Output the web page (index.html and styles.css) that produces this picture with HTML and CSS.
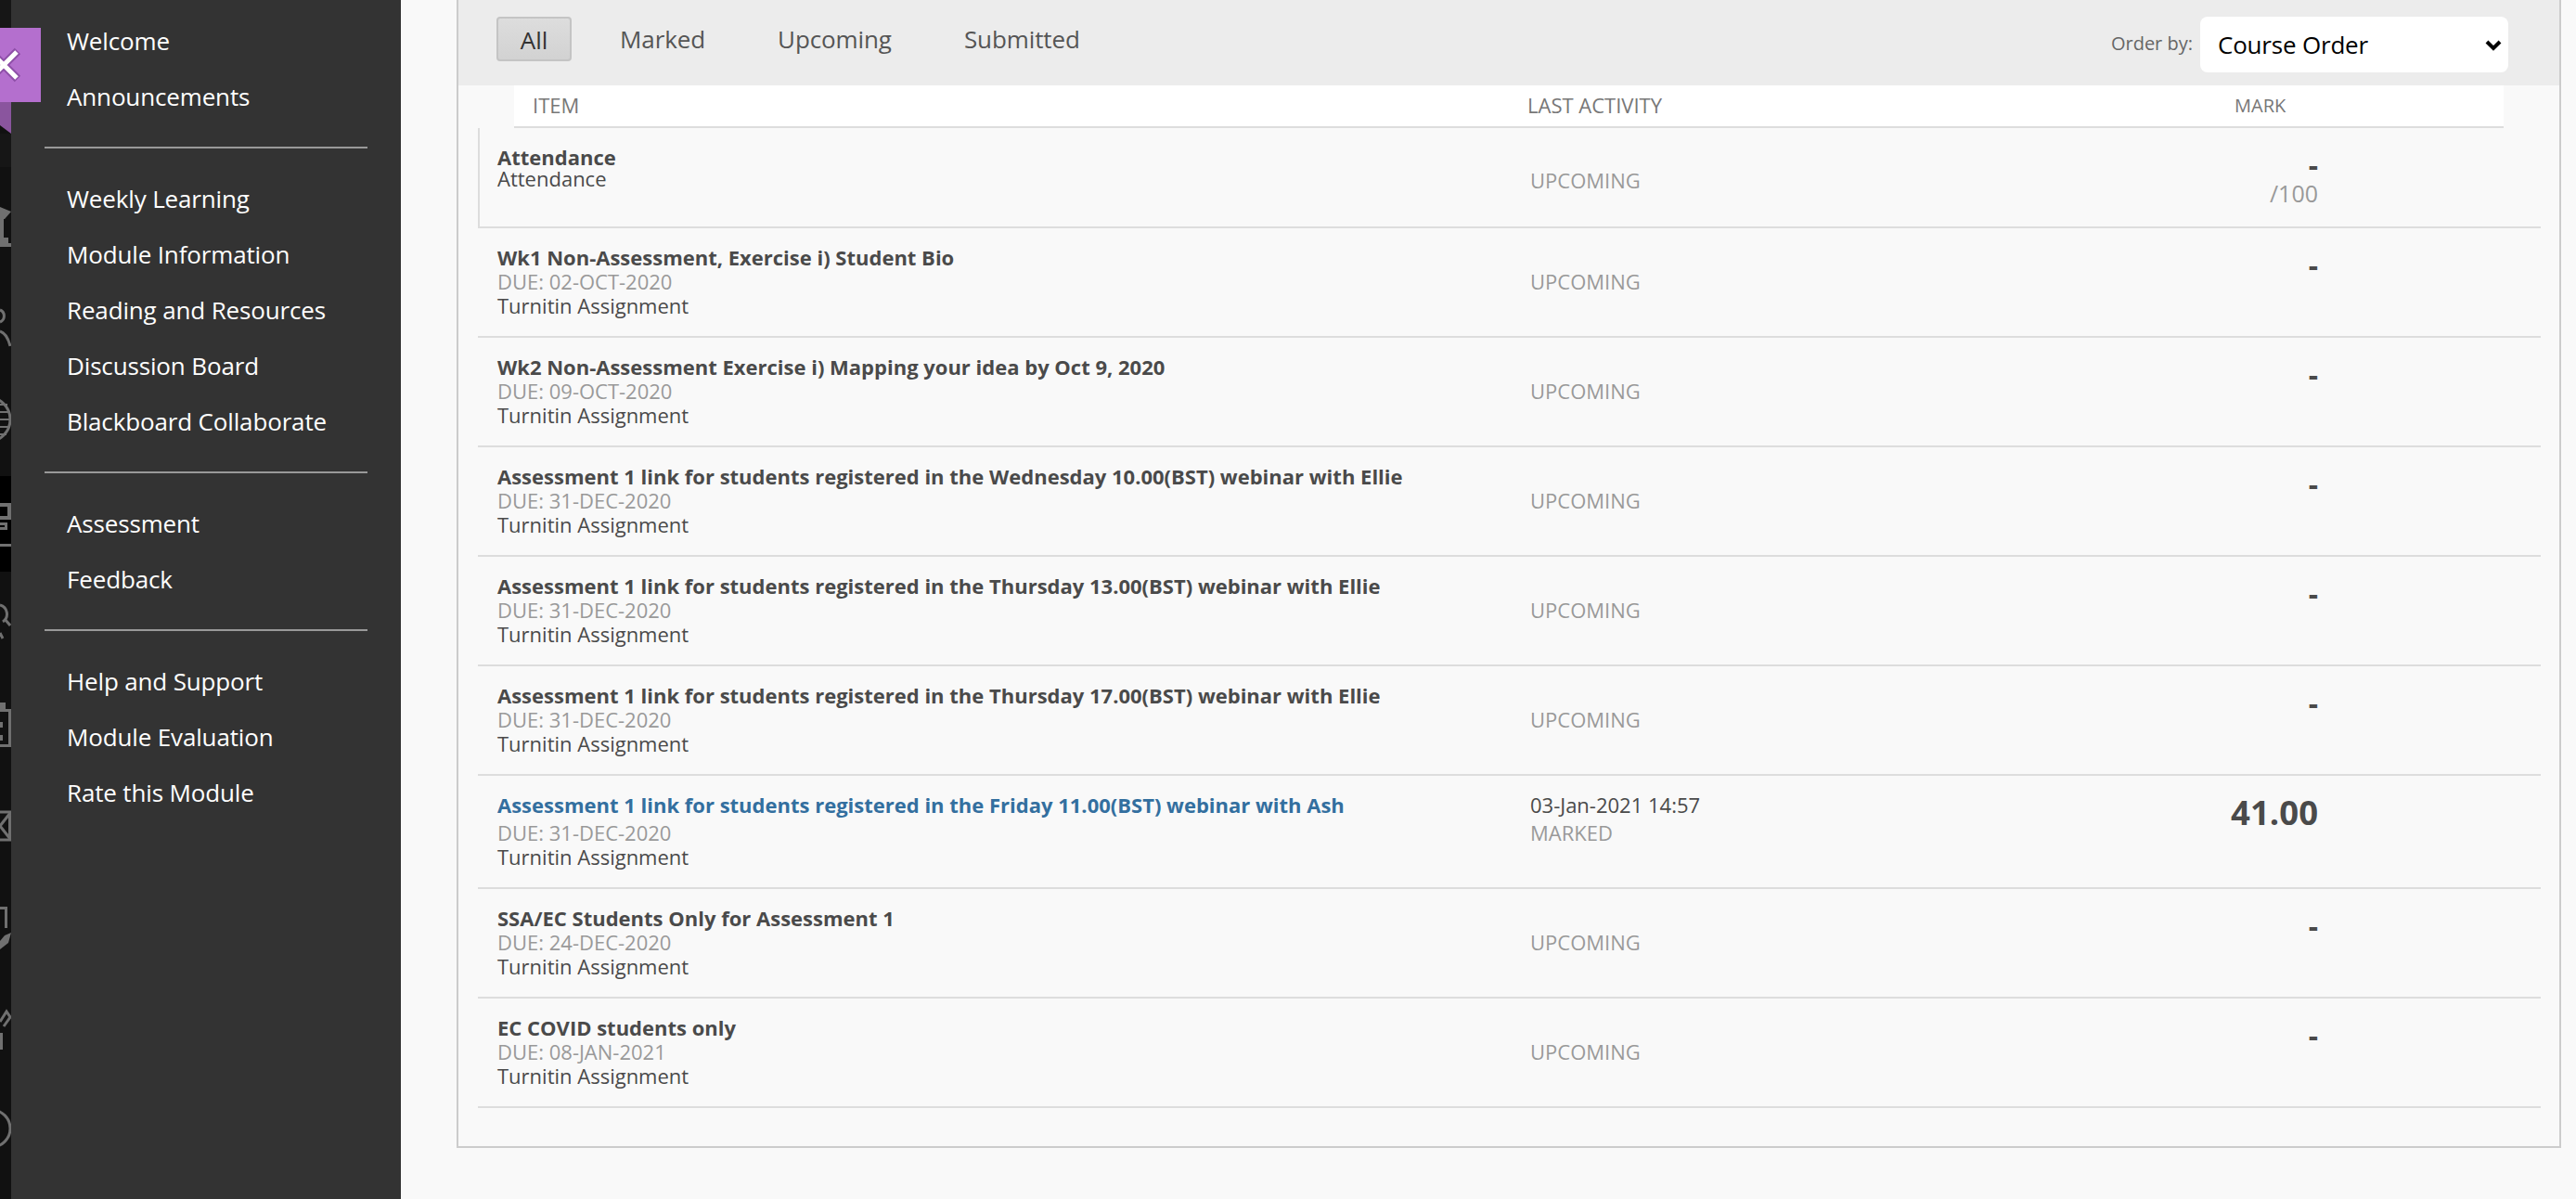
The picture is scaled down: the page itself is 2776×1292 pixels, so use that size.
FILE: index.html
```html
<!DOCTYPE html>
<html lang="en">
<head>
  <meta charset="UTF-8">
  <title>My Marks</title>
  <link rel="stylesheet" href="styles.css">
</head>
<body>
  <!-- Icon rail, mostly hidden behind the course menu -->
  <div class="rail">
    <svg width="12" height="1292" viewBox="0 0 12 1292">
      <rect x="0" y="0" width="12" height="1292" fill="#111"/>
      <rect x="0" y="0" width="12" height="30" fill="#161616"/>
      <rect x="0" y="513" width="12" height="103" fill="#000"/>
      <path d="M0 110 H12 V144 L0 135 Z" fill="#8a559e"/>
      <rect x="0" y="144" width="12" height="36" fill="#161616"/>
      <g fill="#707070">
        <path d="M0 223 L12 228 L5 236 H0 Z"/>
        <rect x="0" y="236" width="4" height="20"/>
        <path d="M0 256 H9 V262 H12 V266 H0 Z"/>
        <rect x="0" y="542" width="12" height="4"/>
        <rect x="8" y="542" width="4" height="18"/>
        <rect x="0" y="556" width="12" height="4"/>
        <rect x="0" y="563" width="8" height="3"/>
        <rect x="5" y="563" width="3" height="8"/>
        <rect x="0" y="568" width="8" height="3"/>
        <rect x="0" y="586" width="12" height="3"/>
        <rect x="0" y="757" width="6" height="8"/>
        <rect x="0" y="764" width="12" height="3"/>
        <rect x="9" y="764" width="3" height="41"/>
        <rect x="0" y="802" width="12" height="3"/>
        <rect x="0" y="778" width="3" height="6"/>
        <rect x="0" y="792" width="3" height="6"/>
        <path d="M12 1005 L9 1016 L0 1023 V1014 L5 1008 Z"/>
        <rect x="0" y="1113" width="3" height="18"/>
      </g>
      <g fill="none" stroke="#707070" stroke-width="3">
        <path d="M0 334 A7 7 0 0 1 0 347"/>
        <path d="M0 357 C6 359 9 365 11 373"/>
        <circle cx="-13" cy="452" r="24"/>
        <path d="M0 436 H8 M0 444 H11 M0 452 H11 M0 460 H10 M0 468 H7" stroke-width="2"/>
        <path d="M0 652 A10 10 0 0 1 3 670"/>
        <path d="M5 667 L11 674"/>
        <path d="M0 682 L3 688"/>
        <path d="M0 875 H10.500 V905 H0"/>
        <path d="M11 876 L0 890 L11 904"/>
        <path d="M0 978.500 H6.500 V1000"/>
        <path d="M0 1101 L7 1090 L11 1096 L4 1106"/>
        <circle cx="-9" cy="1216" r="20"/>
      </g>
    </svg>
  </div>

  <!-- Course menu -->
  <nav class="course-menu">
    <div class="close-tag">
      <svg width="44" height="80" viewBox="0 0 44 80"><path d="M-11 25 L19 55 M19 25 L-11 55" stroke="#8e4fa8" stroke-width="9" fill="none"/><path d="M-11 25 L18 54 M18 26 L-11 55" stroke="#fff" stroke-width="5" fill="none"/></svg>
    </div>
    <ul class="menu-group">
      <li>Welcome</li>
      <li>Announcements</li>
    </ul>
    <ul class="menu-group">
      <li>Weekly Learning</li>
      <li>Module Information</li>
      <li>Reading and Resources</li>
      <li>Discussion Board</li>
      <li>Blackboard Collaborate</li>
    </ul>
    <ul class="menu-group">
      <li>Assessment</li>
      <li>Feedback</li>
    </ul>
    <ul class="menu-group">
      <li>Help and Support</li>
      <li>Module Evaluation</li>
      <li>Rate this Module</li>
    </ul>
  </nav>

  <main class="content">
    <div class="panel">
      <!-- Filter bar -->
      <div class="toolbar">
        <div class="filters">
          <span class="filter active">All</span>
          <span class="filter">Marked</span>
          <span class="filter">Upcoming</span>
          <span class="filter">Submitted</span>
        </div>
        <div class="order">
          <label for="order">Order by:</label>
          <div class="select-wrap">
            <select id="order"><option>Course Order</option></select>
            <svg class="chevron" width="18" height="12" viewBox="0 0 18 12"><path d="M2 2 L9 9 L16 2" stroke="#000" stroke-width="4" fill="none"/></svg>
          </div>
        </div>
      </div>

      <!-- Column headers -->
      <div class="table-head">
        <span class="col-item">ITEM</span>
        <span class="col-activity">LAST ACTIVITY</span>
        <span class="col-mark">MARK</span>
      </div>

      <!-- Rows -->
      <div class="row first">
        <div class="cell-item">
          <div class="title">Attendance</div>
          <div class="kind">Attendance</div>
        </div>
        <div class="cell-activity muted">UPCOMING</div>
        <div class="cell-mark"><span class="dash">-</span><span class="out-of">/100</span></div>
      </div>

      <div class="row">
        <div class="cell-item">
          <div class="title">Wk1 Non-Assessment, Exercise i) Student Bio</div>
          <div class="due">DUE: 02-OCT-2020</div>
          <div class="kind">Turnitin Assignment</div>
        </div>
        <div class="cell-activity muted">UPCOMING</div>
        <div class="cell-mark"><span class="dash">-</span></div>
      </div>

      <div class="row">
        <div class="cell-item">
          <div class="title">Wk2 Non-Assessment Exercise i) Mapping your idea by Oct 9, 2020</div>
          <div class="due">DUE: 09-OCT-2020</div>
          <div class="kind">Turnitin Assignment</div>
        </div>
        <div class="cell-activity muted">UPCOMING</div>
        <div class="cell-mark"><span class="dash">-</span></div>
      </div>

      <div class="row">
        <div class="cell-item">
          <div class="title">Assessment 1 link for students registered in the Wednesday 10.00(BST) webinar with Ellie</div>
          <div class="due">DUE: 31-DEC-2020</div>
          <div class="kind">Turnitin Assignment</div>
        </div>
        <div class="cell-activity muted">UPCOMING</div>
        <div class="cell-mark"><span class="dash">-</span></div>
      </div>

      <div class="row">
        <div class="cell-item">
          <div class="title">Assessment 1 link for students registered in the Thursday 13.00(BST) webinar with Ellie</div>
          <div class="due">DUE: 31-DEC-2020</div>
          <div class="kind">Turnitin Assignment</div>
        </div>
        <div class="cell-activity muted">UPCOMING</div>
        <div class="cell-mark"><span class="dash">-</span></div>
      </div>

      <div class="row">
        <div class="cell-item">
          <div class="title">Assessment 1 link for students registered in the Thursday 17.00(BST) webinar with Ellie</div>
          <div class="due">DUE: 31-DEC-2020</div>
          <div class="kind">Turnitin Assignment</div>
        </div>
        <div class="cell-activity muted">UPCOMING</div>
        <div class="cell-mark"><span class="dash">-</span></div>
      </div>

      <div class="row graded">
        <div class="cell-item">
          <div class="title link">Assessment 1 link for students registered in the Friday 11.00(BST) webinar with Ash</div>
          <div class="due">DUE: 31-DEC-2020</div>
          <div class="kind">Turnitin Assignment</div>
        </div>
        <div class="cell-activity">
          <div>03-Jan-2021 14:57</div>
          <div class="muted">MARKED</div>
        </div>
        <div class="cell-mark"><span class="grade">41.00</span></div>
      </div>

      <div class="row">
        <div class="cell-item">
          <div class="title">SSA/EC Students Only for Assessment 1</div>
          <div class="due">DUE: 24-DEC-2020</div>
          <div class="kind">Turnitin Assignment</div>
        </div>
        <div class="cell-activity muted">UPCOMING</div>
        <div class="cell-mark"><span class="dash">-</span></div>
      </div>

      <div class="row">
        <div class="cell-item">
          <div class="title">EC COVID students only</div>
          <div class="due">DUE: 08-JAN-2021</div>
          <div class="kind">Turnitin Assignment</div>
        </div>
        <div class="cell-activity muted">UPCOMING</div>
        <div class="cell-mark"><span class="dash">-</span></div>
      </div>
    </div>
  </main>
</body>
</html>
```

FILE: styles.css
```css
* {
  margin: 0;
  padding: 0;
  box-sizing: border-box;
}

body {
  font-family: "Open Sans", Arial, sans-serif;
  background-color: #f9f9f9;
  display: flex;
  height: 1292px;
  overflow: hidden;
  color: #4a4a4a;
}

.rail {
  width: 12px;
  flex-shrink: 0;
  overflow: hidden;
}

.rail svg {
  display: block;
}

/* Course menu */
.course-menu {
  width: 420px;
  flex-shrink: 0;
  background-color: #333;
  padding: 14px 36px 0 36px;
  position: relative;
}

.close-tag {
  position: absolute;
  left: -12px;
  top: 30px;
  width: 44px;
  height: 80px;
  background-color: #b46fce;
  overflow: hidden;
}

.menu-group {
  list-style: none;
  padding: 0 0 24px 0;
  margin-bottom: 24px;
  border-bottom: 2px solid #999;
}

.menu-group:last-child {
  border-bottom: none;
}

.menu-group li {
  font-size: 26px;
  letter-spacing: -0.15px;
  line-height: 60px;
  color: #fff;
  padding-left: 24px;
}

/* Main panel */
.content {
  flex: 1;
  padding-left: 60px;
  padding-right: 16px;
}

.panel {
  height: 1237px;
  border: 2px solid #ccc;
  border-top: none;
  background-color: #f9f9f9;
}

.toolbar {
  height: 92px;
  background-color: #ececec;
  display: flex;
  justify-content: space-between;
  align-items: flex-start;
  padding: 18px 55px 0 41px;
}

.filters {
  display: flex;
  align-items: center;
}

.filter {
  font-size: 26px;
  letter-spacing: -0.1px;
  line-height: 46px;
  color: #555;
  margin-right: 78px;
}

.filter.active {
  width: 81px;
  height: 48px;
  margin-right: 52px;
  text-align: center;
  color: #333;
  background: linear-gradient(#ddd, #d2d2d2);
  border: 2px solid #c4c4c4;
  border-radius: 4px;
}

.order {
  display: flex;
  align-items: center;
}

.order label {
  font-size: 20px;
  color: #666;
  margin-right: 8px;
  margin-top: -4px;
}

.select-wrap {
  position: relative;
}

.select-wrap select {
  display: block;
  width: 332px;
  height: 60px;
  border: none;
  border-radius: 8px;
  background-color: #fff;
  color: #000;
  font-family: "Open Sans", Arial, sans-serif;
  font-size: 26px;
  letter-spacing: -0.2px;
  padding-left: 19px;
  appearance: none;
}

.chevron {
  position: absolute;
  right: 7px;
  top: 25px;
}

.table-head {
  height: 46px;
  margin: 0 60px;
  padding-bottom: 2px;
  background-color: #fff;
  border-bottom: 2px solid #ddd;
  display: flex;
  align-items: center;
  font-size: 22px;
  color: #777;
}

.col-item {
  width: 1092px;
  padding-left: 20px;
}

.col-activity {
  width: 762px;
}

.col-mark {
  font-size: 20px;
}

.row {
  height: 118px;
  margin: 0 20px 0 21px;
  border-bottom: 2px solid #ddd;
  display: flex;
  font-size: 22px;
  line-height: 26px;
}

.row.first {
  height: 108px;
  border-left: 2px solid #ddd;
}

.row.graded {
  height: 122px;
}

.cell-item {
  width: 1134px;
  padding: 18px 0 0 21px;
}

.row.first .cell-item {
  width: 1132px;
  padding: 18px 0 0 19px;
}

.row.first .kind {
  margin-top: -3px;
}

.row.first .cell-activity {
  padding-top: 8px;
}

.title {
  font-weight: 700;
}

.title.link {
  color: #336f9f;
  margin-bottom: 4px;
}

.due,
.muted {
  color: #999;
}

.cell-activity {
  width: 704px;
  margin-top: -2px;
  align-self: center;
}

.row.graded .cell-activity {
  align-self: flex-start;
  margin-top: 0;
  padding-top: 18px;
}

.row.graded .cell-activity .muted {
  margin-top: 4px;
}

.cell-mark {
  width: 145px;
  padding-top: 27px;
  display: flex;
  flex-direction: column;
  align-items: flex-end;
}

.row.graded .cell-mark {
  padding-top: 19px;
}

.dash {
  font-size: 32px;
  font-weight: 700;
  line-height: 26px;
}

.out-of {
  font-size: 25px;
  line-height: 34px;
  color: #999;
}

.grade {
  font-size: 36.500px;
  font-weight: 700;
  line-height: 40px;
}
```
